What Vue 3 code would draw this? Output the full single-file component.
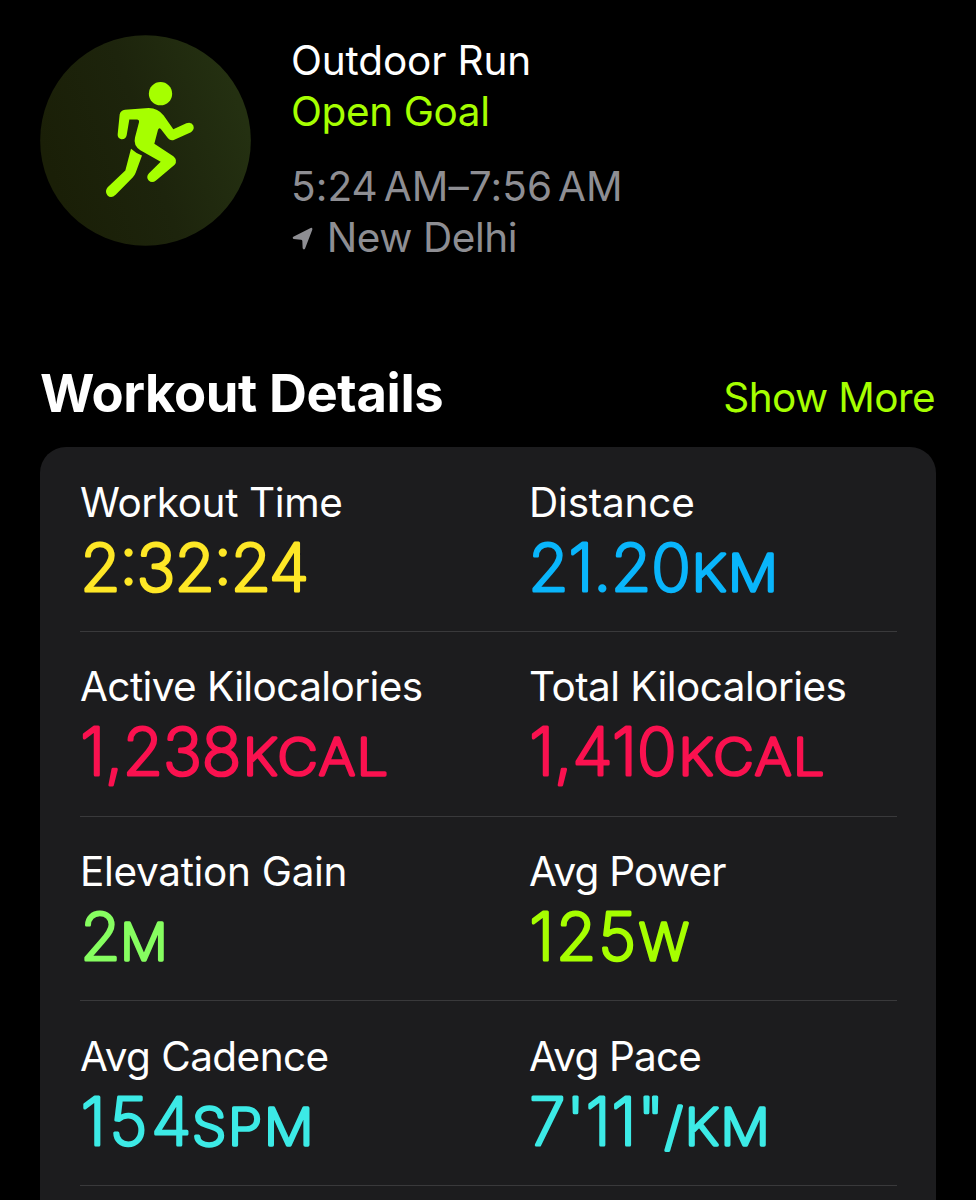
<script setup>
const rows = [
  [
    { label: 'Workout Time', ls: -0.4, color: '#fee726', num: '2:32:24', x: 0.2, len: 229 },
    { label: 'Distance', ls: -0.2, color: '#09b5fb', num: '21.20', x: -0.8, len: 162.7, unit: 'KM', ux: 162.7, ulen: 88 },
  ],
  [
    { label: 'Active Kilocalories', ls: -0.6, color: '#fa114f', num: '1,238', x: 0.3, len: 161, unit: 'KCAL', ux: 163, ulen: 146.8 },
    { label: 'Total Kilocalories', ls: -0.56, color: '#fa114f', num: '1,410', x: 0.3, len: 147.3, unit: 'KCAL', ux: 149.5, ulen: 147.8 },
  ],
  [
    { label: 'Elevation Gain', ls: -0.32, color: '#86fe60', num: '2', x: 0.2, unit: 'M', ux: 40.3, ulen: 49 },
    { label: 'Avg Power', ls: -0.8, color: '#a6ff00', num: '125', x: 0.3, len: 106.9, unit: 'W', ux: 110, ulen: 51.5 },
  ],
  [
    { label: 'Avg Cadence', ls: -0.56, color: '#3ceae6', num: '154', x: 0.8, len: 110.6, unit: 'SPM', ux: 112.1, ulen: 123 },
    { label: 'Avg Pace', ls: -0.85, color: '#3ceae6', num: '7\'11"', x: 0.2, len: 135.2, unit: '/KM', ux: 135.5, ulen: 107 },
  ],
]
</script>

<template>
  <main class="screen">
    <header class="summary">
      <svg class="badge" viewBox="30 29.5 633 633" aria-hidden="true">
        <defs>
          <linearGradient id="badge-fill" x1="0.05" y1="0.65" x2="0.95" y2="0.35">
            <stop offset="0" stop-color="#1a1f07" />
            <stop offset="0.5" stop-color="#1d240c" />
            <stop offset="1" stop-color="#243011" />
          </linearGradient>
        </defs>
        <circle cx="346.5" cy="346" r="316" fill="url(#badge-fill)" />
        <g fill="#a6ff00">
          <circle cx="391.5" cy="205.5" r="35" />
          <path d="M285 253.500L356 248.500Q384 249 401 271L430 312L469 294.500Q484 289 490 301Q494 314 483 321L433 343.500Q422 348 414 339L393 312Q387 306 384 314L373 356L430 393Q444 404 434 419L378 466Q366 475 356 466Q347 455 357 444L392 410L331 375Q309 361 315 337L327 291Q328 283 321 283L298 283L290 330Q287 343 274 342Q262 339 263 327L269 268Q272 254.500 285 253.500Z" />
          <path d="M303 371Q317 384 336 391L317 443Q314 451 308 457L257 509Q243 522 232 510Q223 498 233 486L286 436Z" />
        </g>
      </svg>
      <div class="info">
        <div class="line title">Outdoor Run</div>
        <div class="line goal">Open Goal</div>
        <div class="line time">5:24 AM–7:56 AM</div>
        <div class="line place">
          <svg class="arrow" viewBox="36 592 64 70" aria-hidden="true">
            <path fill="#8e8e93" d="M92 595Q98 593 97 600L75 657Q71 662 68 656L67 633Q66 630 63 630L41 628Q36 625 40 621Z" />
          </svg>
          <span>New Delhi</span>
        </div>
      </div>
    </header>

    <div class="heading">
      <h1>Workout Details</h1>
      <a class="more">Show More</a>
    </div>

    <section class="card">
      <div v-for="(row, i) in rows" :key="i" class="row">
        <div v-for="m in row" :key="m.label" class="cell">
          <div class="label" :style="{ letterSpacing: m.ls + 'px' }">{{ m.label }}</div>
          <svg class="value" width="400" height="80" :style="{ color: m.color }">
            <text class="num" :x="m.x" y="63.7" :textLength="m.len">{{ m.num }}</text>
            <text v-if="m.unit" class="unit" :x="m.ux" y="63.7" :textLength="m.ulen" lengthAdjust="spacingAndGlyphs">{{ m.unit }}</text>
          </svg>
        </div>
      </div>
    </section>
  </main>
</template>

<style>
html,
body {
  background: #000;
}
</style>

<style scoped>
.screen {
  box-sizing: border-box;
  height: 1200px;
  overflow: hidden;
  padding: 35px 40px 0;
  background: #000;
  color: #fff;
  font-family: Inter, "Liberation Sans", sans-serif;
  font-size: 40.5px;
  display: flex;
  flex-direction: column;
}
.summary {
  display: flex;
  gap: 40px;
  height: 323px;
  flex: none;
}
.badge {
  width: 211px;
  height: 211px;
  flex: none;
}
.info {
  padding-top: 1px;
}
.line {
  line-height: 50.5px;
  white-space: nowrap;
}
.title {
  letter-spacing: -0.15px;
}
.goal {
  color: #a6ff00;
  letter-spacing: -0.4px;
}
.time {
  margin-top: 25px;
  color: #8e8e93;
  letter-spacing: 0.08px;
  word-spacing: -5.5px;
}
.place {
  display: flex;
  align-items: center;
  gap: 13.5px;
  color: #8e8e93;
  letter-spacing: -0.44px;
}
.arrow {
  width: 21.3px;
  height: 23.3px;
  margin: 1px 0 0 1px;
}
.heading {
  display: flex;
  justify-content: space-between;
  align-items: baseline;
  height: 89px;
  flex: none;
}
h1 {
  margin: 0;
  font-size: 52.5px;
  line-height: 70px;
  font-weight: 700;
  letter-spacing: -0.39px;
}
.more {
  margin-right: 1px;
  color: #a6ff00;
  letter-spacing: -0.59px;
}
.card {
  flex: none;
  height: 800px;
  padding: 0 39px 0 40px;
  border-radius: 26px;
  background: #1c1c1e;
}
.row {
  box-sizing: border-box;
  display: grid;
  grid-template-columns: 449px 1fr;
  height: 184.76px;
  padding-top: 30.5px;
  border-bottom: 1px solid #39393b;
}
.cell {
  min-width: 0;
}
.label {
  line-height: 50px;
  white-space: nowrap;
}
.value {
  display: block;
  margin-top: -1px;
  overflow: visible;
}
.value text {
  fill: currentColor;
  stroke: currentColor;
  stroke-linejoin: round;
  font-weight: 200;
}
.num {
  font-size: 65.5px;
  stroke-width: 3.1px;
}
.unit {
  font-size: 51px;
  letter-spacing: 1.6px;
  stroke-width: 3.3px;
}
</style>
